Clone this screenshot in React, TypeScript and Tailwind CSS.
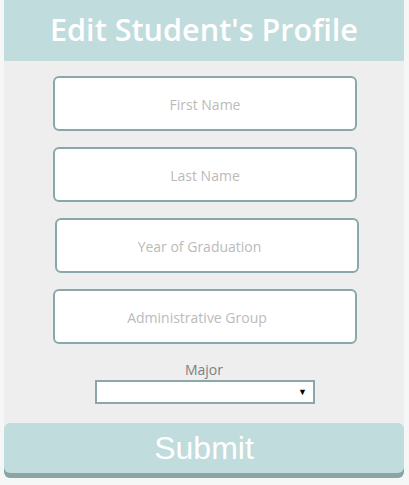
import React from 'react';

const fields = [
  { name: "First Name", shift: "" },
  { name: "Last Name", shift: "" },
  { name: "Year of Graduation", shift: "ml-[2px] w-[303px] pr-[15px]" },
  { name: "Administrative Group", shift: "pr-[16px]" },
];

const App = () => (
  <div className="min-h-[485px] bg-[#f5f6f6] pl-1 font-['Open_Sans',sans-serif]">
    <div className="w-[400px]">
      <div className="h-[61px] bg-[#c1dcdd] flex items-center justify-center">
        <h1 className="text-[30.6px] font-semibold text-white leading-none pb-[2px]">Edit Student's Profile</h1>
      </div>
      <form className="bg-[#eeeeee] pt-[15px] flex flex-col items-center">
        <div className="self-start ml-[49px] flex flex-col gap-4">
          {fields.map((f) => (
            <input
              key={f.name}
              placeholder={f.name}
              className={`w-[304px] h-[55px] pt-[2px] bg-white border-2 border-[#8aa8aa] rounded-md text-center text-[14px] text-[#555] placeholder:text-[#bbbbbb] outline-none ${f.shift}`}
            />
          ))}
        </div>
        <label className="mt-[17px] text-[14px] text-[#808080] leading-[18px]">Major</label>
        <div className="relative mt-[1px] ml-[2px] w-[220px] h-[24px] bg-white border-2 border-[#8aa8aa]">
          <span className="absolute right-[6px] top-[3px] text-[9px] text-black">▼</span>
        </div>
        <div className="h-[19px]" />
        <button
          type="button"
          className="w-[400px] h-[50px] bg-[#c1dcdd] rounded-md shadow-[0_5px_0_#8aa5a6] text-white text-[32px] font-['Liberation_Sans',Arial,sans-serif] leading-none"
        >
          Submit
        </button>
      </form>
    </div>
  </div>
);

export default App;
